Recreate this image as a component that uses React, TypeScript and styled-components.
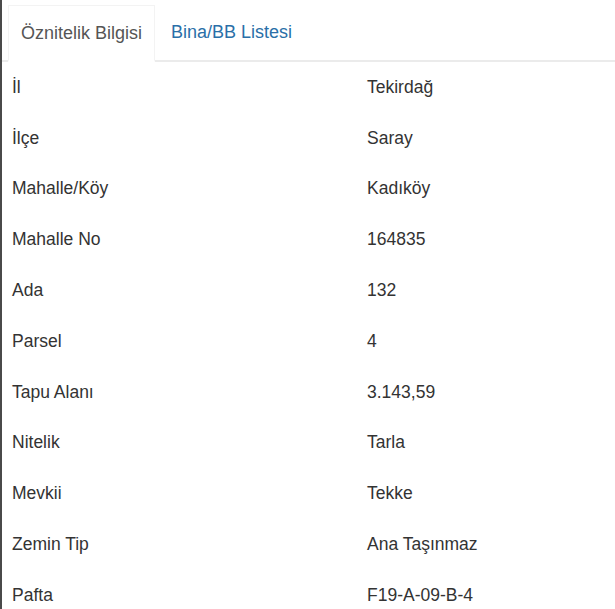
import styled, { createGlobalStyle } from "styled-components";

const GlobalStyle = createGlobalStyle`
  html, body {
    margin: 0;
    background: #ffffff;
  }
  body {
    font-family: "Liberation Sans", Arial, sans-serif;
  }
`;

const colors = {
  text: "#333333",
  tabText: "#555555",
  link: "#2a6fa8",
  border: "#ebebeb",
  frame: "#4a4a4a",
};

const rows: [string, string][] = [
  ["İl", "Tekirdağ"],
  ["İlçe", "Saray"],
  ["Mahalle/Köy", "Kadıköy"],
  ["Mahalle No", "164835"],
  ["Ada", "132"],
  ["Parsel", "4"],
  ["Tapu Alanı", "3.143,59"],
  ["Nitelik", "Tarla"],
  ["Mevkii", "Tekke"],
  ["Zemin Tip", "Ana Taşınmaz"],
  ["Pafta", "F19-A-09-B-4"],
];

const Panel = styled.div`
  border-left: 2px solid ${colors.frame};
  height: 609px;
  box-sizing: border-box;
  overflow: hidden;
`;

const Tabs = styled.ul`
  display: flex;
  align-items: flex-start;
  margin: 0;
  padding: 5px 0 0 6px;
  list-style: none;
  border-bottom: 2px solid ${colors.border};
`;

const Tab = styled.li<{ $active?: boolean }>`
  height: ${(p) => (p.$active ? 57 : 55)}px;
  display: flex;
  align-items: center;
  padding: ${(p) => (p.$active ? "0 12px 0 12px" : "0 12px 2px 15px")};
  margin-bottom: ${(p) => (p.$active ? "-2px" : "0")};
  font-size: 18px;
  color: ${(p) => (p.$active ? colors.tabText : colors.link)};
  background: ${(p) => (p.$active ? "#fff" : "transparent")};
  border: 1px solid ${(p) => (p.$active ? "#f3f3f3" : "transparent")};
  border-bottom: ${(p) => (p.$active ? "2px solid #fff" : "none")};
  box-sizing: border-box;
  cursor: pointer;
`;

const Table = styled.table`
  width: 100%;
  border-collapse: collapse;
  font-size: 17.5px;
  color: ${colors.text};
`;

const Row = styled.tr`
  height: 50.8px;
`;

const Cell = styled.td<{ $label?: boolean }>`
  padding: 0 10px;
  vertical-align: middle;
  width: ${(p) => (p.$label ? "335px" : "auto")};
`;

export default function App() {
  return (
    <>
      <GlobalStyle />
      <Panel>
        <Tabs>
          <Tab $active>Öznitelik Bilgisi</Tab>
          <Tab>Bina/BB Listesi</Tab>
        </Tabs>
        <Table>
          <tbody>
            {rows.map(([label, value]) => (
              <Row key={label}>
                <Cell $label>{label}</Cell>
                <Cell>{value}</Cell>
              </Row>
            ))}
          </tbody>
        </Table>
      </Panel>
    </>
  );
}
